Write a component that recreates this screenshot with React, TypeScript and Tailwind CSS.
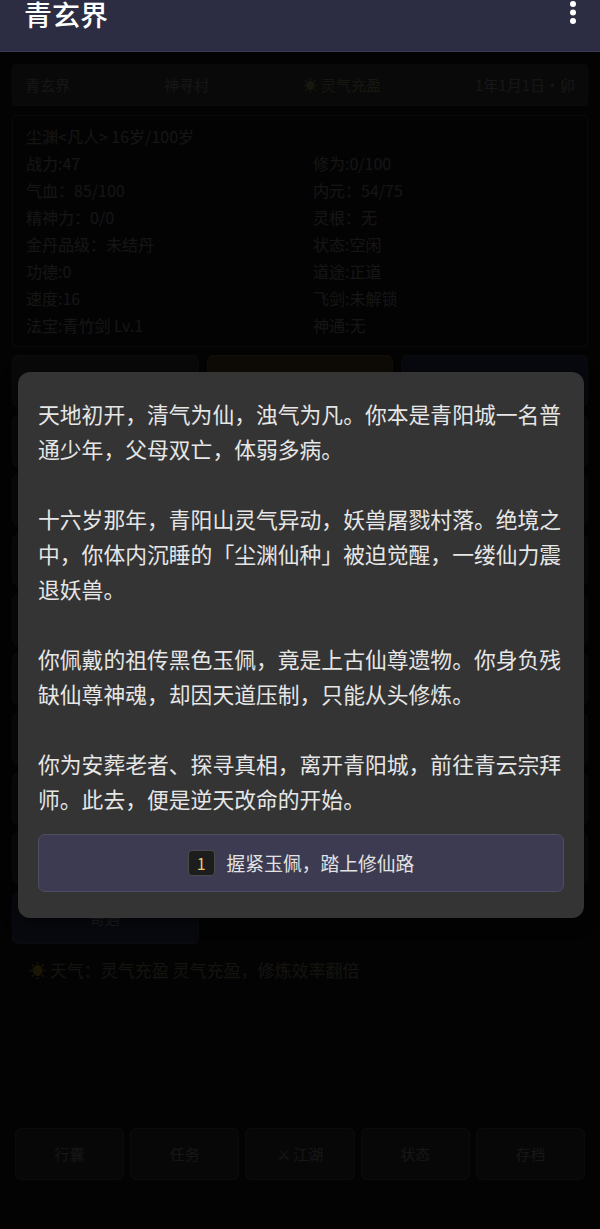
import React from "react";

const stats: [string, string][] = [
  ["战力:47", "修为:0/100"],
  ["气血：85/100", "内元：54/75"],
  ["精神力：0/0", "灵根：无"],
  ["金丹品级：未结丹", "状态:空闲"],
  ["功德:0", "道途:正道"],
  ["速度:16", "飞剑:未解锁"],
  ["法宝:青竹剑 Lv.1", "神通:无"],
];

const actions = [
  "修炼", "历练", "坊市", "炼丹", "炼器", "洞府", "藏经阁", "宗门", "拍卖行",
  "秘境", "灵兽", "传送阵", "论道", "悬赏", "采药", "挖矿", "钓鱼", "闭关",
  "渡劫", "灵田", "交友", "商会", "天机阁", "武斗场", "仙缘", "宝库", "试炼塔", "奇遇",
];

const paragraphs = [
  "天地初开，清气为仙，浊气为凡。你本是青阳城一名普通少年，父母双亡，体弱多病。",
  "十六岁那年，青阳山灵气异动，妖兽屠戮村落。绝境之中，你体内沉睡的「尘渊仙种」被迫觉醒，一缕仙力震退妖兽。",
  "你佩戴的祖传黑色玉佩，竟是上古仙尊遗物。你身负残缺仙尊神魂，却因天道压制，只能从头修炼。",
  "你为安葬老者、探寻真相，离开青阳城，前往青云宗拜师。此去，便是逆天改命的开始。",
];

const nav = ["行囊", "任务", "⚔ 江湖", "状态", "存档"];

export default function App() {
  return (
    <div className="relative flex h-[1229px] w-[600px] flex-col overflow-hidden bg-[#1c1c20] font-['Noto_Sans_CJK_SC','Noto_Sans',sans-serif] text-white">
      {/* App bar */}
      <header className="relative z-20 flex h-[52px] shrink-0 items-start justify-between border-b border-[#3a3a52] bg-[#2c2c42] pl-[24px] pr-[22px]">
        <h1 className="mt-[-1px] text-[28px] font-medium leading-[30px] text-white">青玄界</h1>
        <svg width="10" height="26" viewBox="0 0 10 26" className="text-white" fill="currentColor">
          <circle cx="5" cy="4" r="3" />
          <circle cx="5" cy="12.5" r="3" />
          <circle cx="5" cy="21" r="3" />
        </svg>
      </header>

      {/* Underlying game page */}
      <main className="flex flex-1 flex-col px-[12px] pt-[12px]">
        <div className="flex h-[42px] items-center justify-between rounded-[4px] border border-[#555] bg-[#4a4a4c] px-[12px] text-[15px] text-[#a8a8a8]">
          <span>青玄界</span>
          <span>神寻村</span>
          <span className="text-[#b0a878]">☀ 灵气充盈</span>
          <span>1年1月1日·卯</span>
        </div>

        <div className="mt-[9px] rounded-[4px] border border-[#4a4a4a] px-[13px] py-[7px] text-[16px] leading-[27px] text-[#a0a0a0]">
          <div>尘渊&lt;凡人&gt; 16岁/100岁</div>
          <div className="grid grid-cols-[287px_1fr]">
            {stats.map(([a, b]) => (
              <React.Fragment key={a}>
                <div>{a}</div>
                <div>{b}</div>
              </React.Fragment>
            ))}
          </div>
        </div>

        <div className="mt-[8px] grid grid-cols-3 gap-x-[8px] gap-y-[7.67px]">
          {actions.map((a, i) => (
            <div
              key={a}
              className={
                "flex h-[52px] items-center justify-center rounded-[6px] border text-[15px] " +
                (i === 1
                  ? "border-[#7a6a38] bg-[#6a5a30] text-[#e0d090]"
                  : i === 2 || i === actions.length - 1
                  ? "border-[#4a5a7a] bg-[#3a4a6a] text-[#c0d0f0]"
                  : "border-[#5a5a5a] bg-[#4a4a4a] text-[#b0b0b0]")
              }
            >
              {a}
            </div>
          ))}
        </div>

        <div className="mt-[14px] px-[17px] text-[17px] leading-[24px] text-[#9a9070]">
          <span className="text-[#c8a830]">☀</span> 天气：灵气充盈 灵气充盈，修炼效率翻倍
        </div>

        <div className="flex-1" />

        <nav className="mb-[49px] grid h-[52px] grid-cols-5 gap-x-[6px] px-[3px]">
          {nav.map((n) => (
            <div
              key={n}
              className="flex items-center justify-center rounded-[6px] border border-[#5a5a5a] bg-[#3c3c3c] text-[15px] text-[#a8a8a8]"
            >
              {n}
            </div>
          ))}
        </nav>
      </main>

      {/* Overlay + modal */}
      <div className="absolute inset-x-0 bottom-0 top-[52px] z-10 flex justify-center bg-black/[0.87] pl-[18px] pr-[16px] pt-[320px]">
        <div className="h-fit w-full rounded-[12px] bg-[#343434] px-[20px] pb-[26px] pt-[24px] shadow-[0_4px_16px_rgba(0,0,0,0.5)]">
          <div className="text-[21.8px] leading-[35px] text-[#e6e6e6]">
            {paragraphs.map((p, i) => (
              <p key={i} className={i > 0 ? "mt-[35px]" : ""}>
                {p}
              </p>
            ))}
          </div>
          <button className="mt-[18px] flex h-[58px] w-full items-center justify-center gap-[12px] rounded-[7px] border border-[#4e4d63] bg-[#3c3b51] text-[18.8px] text-[#e2e2e2]">
            <span className="flex h-[26px] w-[27px] items-center justify-center rounded-[4px] border border-[#4a4a4a] bg-[#1d1d1d] text-[16px] text-[#e8c870]">
              1
            </span>
            <span>握紧玉佩，踏上修仙路</span>
          </button>
        </div>
      </div>
    </div>
  );
}
